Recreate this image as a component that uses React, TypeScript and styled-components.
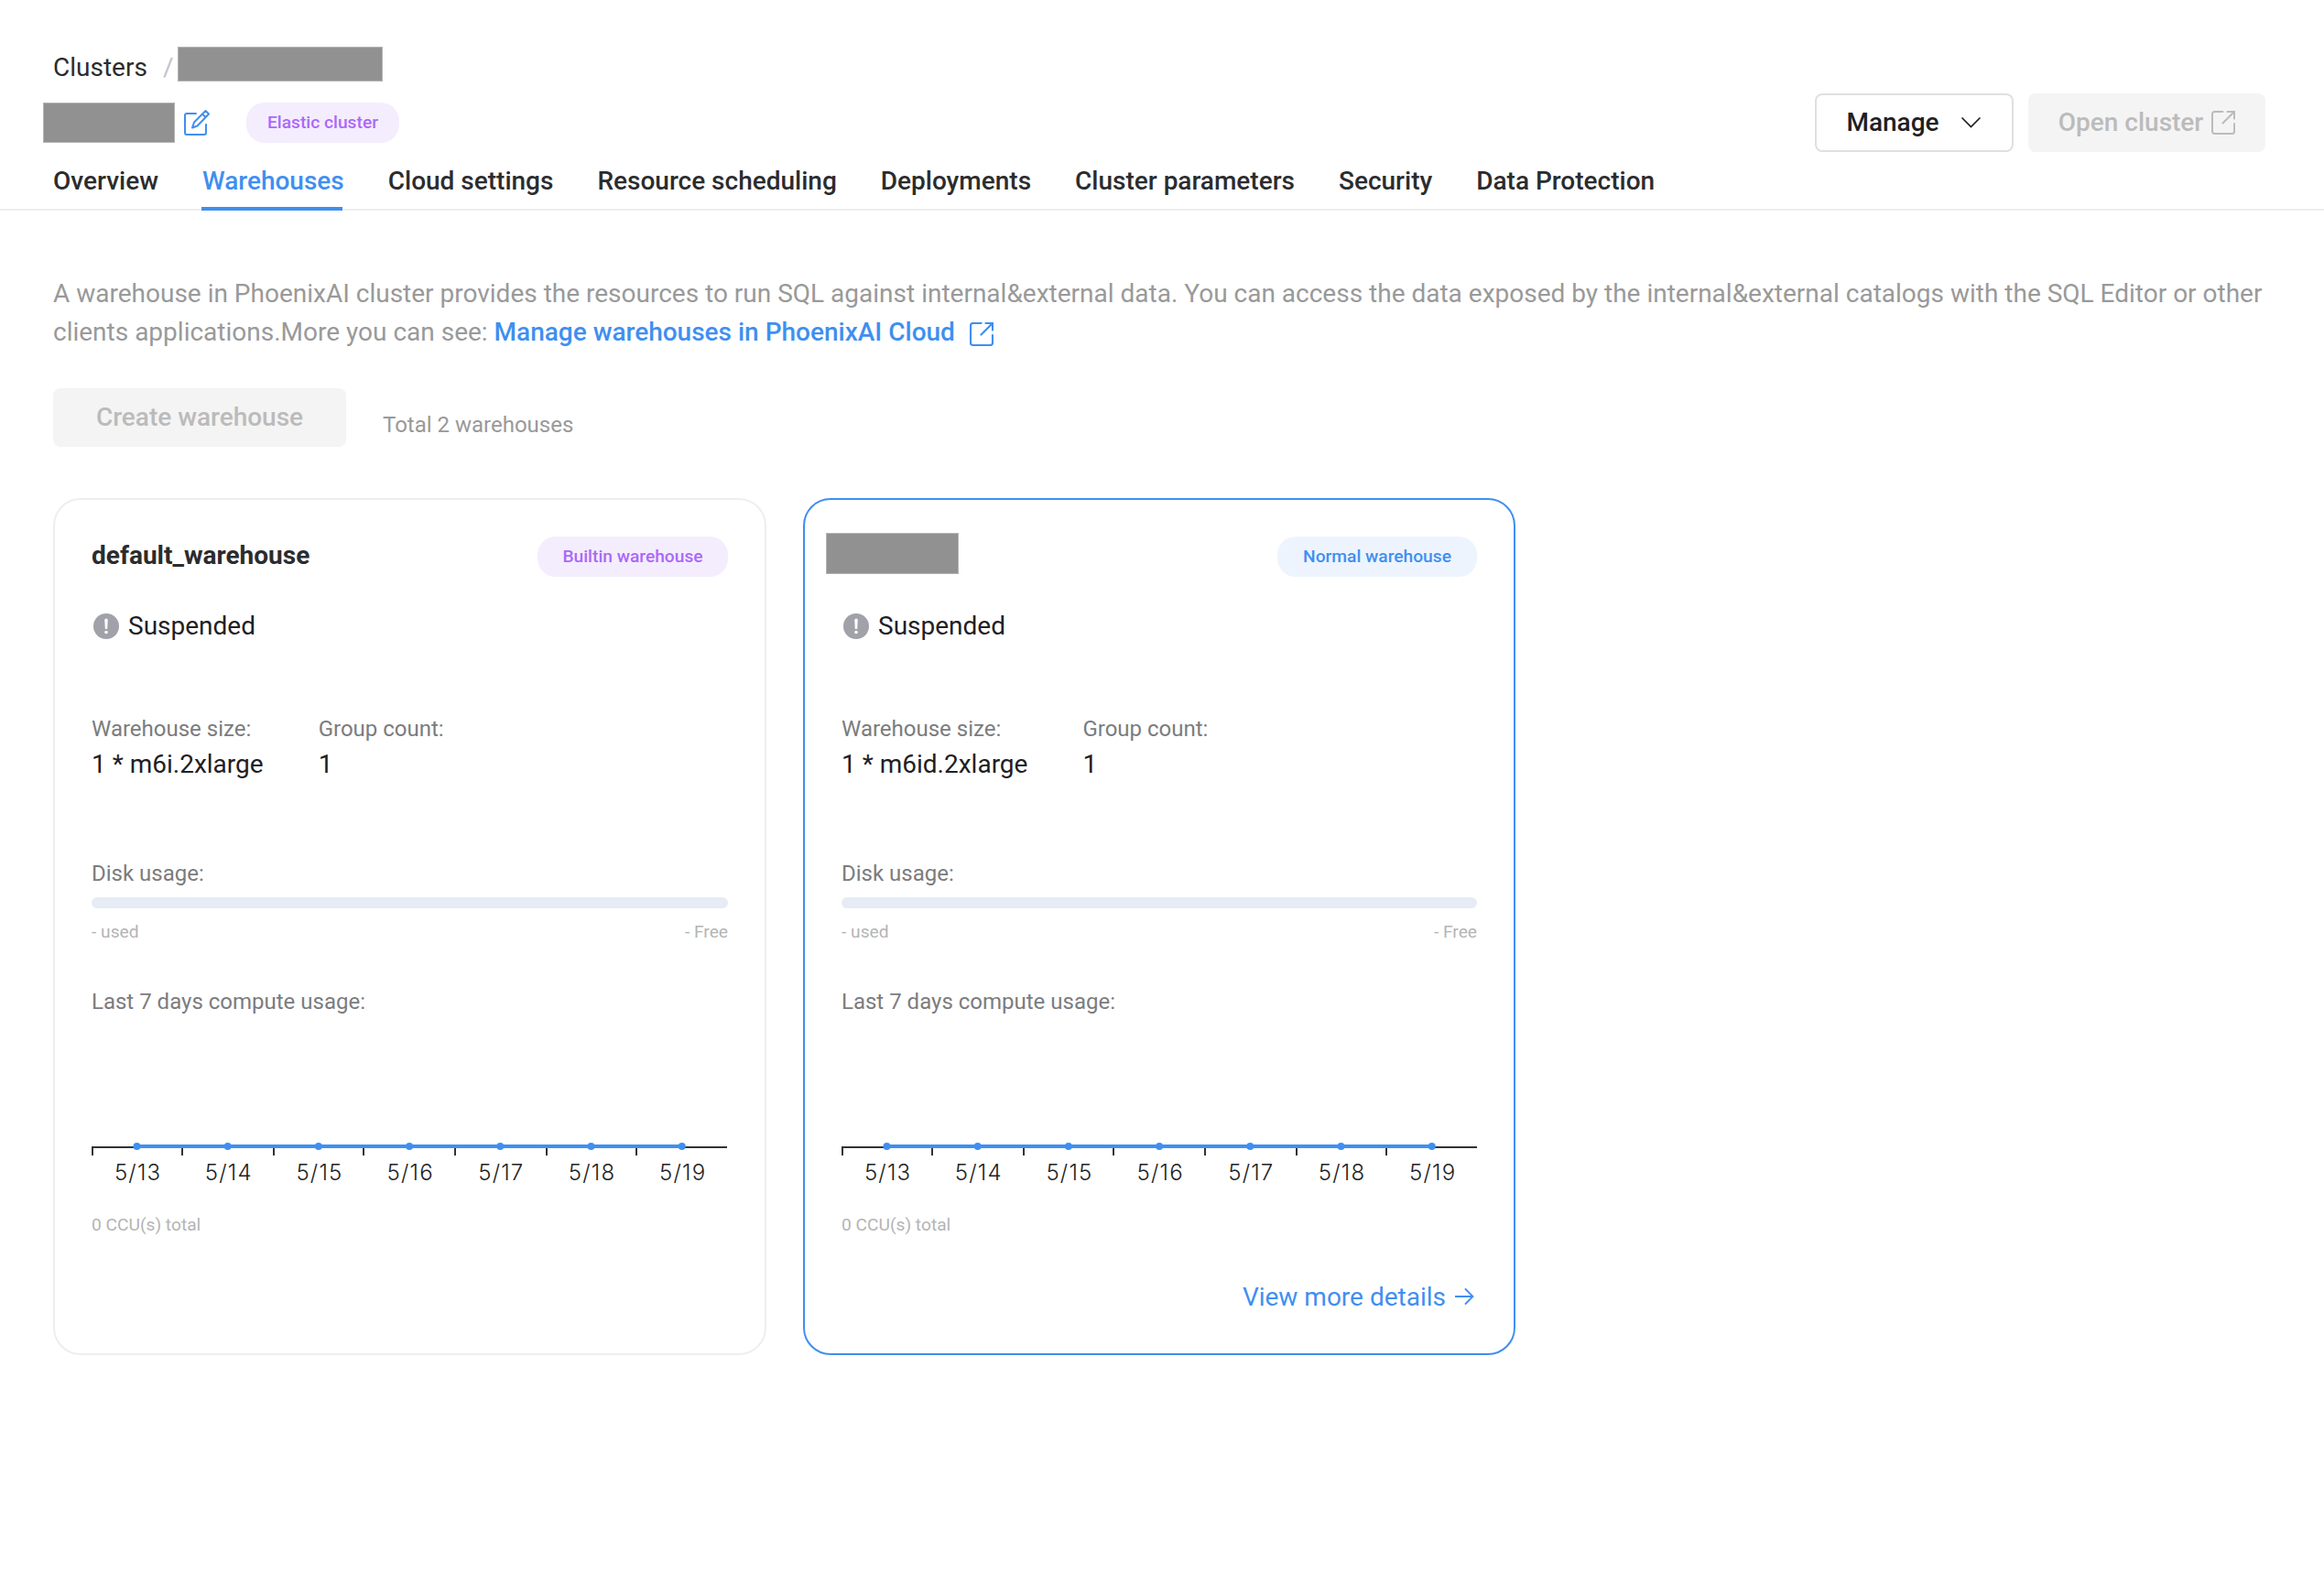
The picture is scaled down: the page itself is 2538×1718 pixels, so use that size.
import React from 'react';
import styled, { createGlobalStyle } from 'styled-components';

const BLUE = '#3f8ff0';

const Global = createGlobalStyle`
  * { box-sizing: border-box; }
  body { margin: 0; background: #fff; font-family: Roboto, "Liberation Sans", sans-serif; color: #2b2c2e; }
`;

const Page = styled.div`
  width: 2538px;
  height: 1718px;
  overflow: hidden;
  background: #fff;
`;

const Header = styled.header`
  height: 230px;
  padding: 51px 64px 0 47px;
  border-bottom: 2px solid #eeeeee;
  display: flex;
  flex-direction: column;
`;

const Breadcrumb = styled.nav`
  display: flex;
  height: 51px;
  padding-left: 11px;
  font-size: 28px;
  line-height: 46px;
`;

const Slash = styled.span`
  color: #c0c4cc;
  margin: 0 5px 0 17px;
`;

const Redacted = styled.span<{ $w: number; $h: number }>`
  display: block;
  flex: none;
  width: ${(p) => p.$w}px;
  height: ${(p) => p.$h}px;
  background: #919191;
  border: 1px solid #b4b4b4;
`;

const TitleRow = styled.div`
  display: flex;
  align-items: flex-start;
  height: 64px;
`;

const TitleGroup = styled.div`
  display: flex;
  align-items: center;
  padding-top: 10px;
`;

const Badge = styled.span<{ $tone: 'purple' | 'blue'; $w: number }>`
  display: flex;
  align-items: center;
  justify-content: center;
  width: ${(p) => p.$w}px;
  height: 44px;
  padding-bottom: 1px;
  border-radius: 20px;
  font-size: 19.2px;
  font-weight: 500;
  white-space: nowrap;
  color: ${(p) => (p.$tone === 'purple' ? '#ab68f8' : BLUE)};
  background: ${(p) => (p.$tone === 'purple' ? '#f4edfe' : '#edf4fe')};
`;

const Actions = styled.div`
  display: flex;
  gap: 16px;
  margin-left: auto;
`;

const Button = styled.button<{ $w: number; $disabled?: boolean }>`
  display: flex;
  align-items: center;
  justify-content: center;
  width: ${(p) => p.$w}px;
  height: 64px;
  padding: 0 0 2px;
  border-radius: 8px;
  border: ${(p) => (p.$disabled ? '0' : '2px solid #e0e0e0')};
  background: ${(p) => (p.$disabled ? '#f4f4f4' : '#fff')};
  color: ${(p) => (p.$disabled ? '#bbbbbb' : '#1f2023')};
  font: 500 28px Roboto, "Liberation Sans", sans-serif;
`;

const Tabs = styled.div`
  display: flex;
  gap: 48px;
  margin-top: auto;
  margin-bottom: -2px;
  padding-left: 11px;
`;

const Tab = styled.a<{ $active?: boolean }>`
  position: relative;
  height: 54px;
  font-size: 28px;
  font-weight: 500;
  line-height: 44px;
  white-space: nowrap;
  color: ${(p) => (p.$active ? BLUE : '#2b2c2e')};

  &::after {
    content: '';
    display: ${(p) => (p.$active ? 'block' : 'none')};
    position: absolute;
    left: -1px;
    right: 2px;
    bottom: 0;
    height: 4px;
    background: ${BLUE};
  }
`;

const Main = styled.main`
  padding: 69px 58px 0;
`;

const Intro = styled.p`
  margin: 0;
  padding-top: 1px;
  height: 84px;
  font-size: 28px;
  line-height: 42px;
  color: #999999;
  white-space: nowrap;
`;

const DocLink = styled.a`
  color: ${BLUE};
  font-weight: 500;
  svg { margin-left: 16px; vertical-align: -6px; }
`;

const Toolbar = styled.div`
  display: flex;
  margin-top: 41px;
  height: 64px;
`;

const Total = styled.span`
  margin: 24px 0 0 40px;
  font-size: 24px;
  line-height: 32px;
  color: #999999;
`;

const Cards = styled.div`
  display: grid;
  grid-template-columns: 779px 778px;
  gap: 40px;
  margin-top: 56px;
`;

const Card = styled.section<{ $active?: boolean }>`
  display: flex;
  flex-direction: column;
  height: 936px;
  padding: 40px;
  border: 2px solid ${(p) => (p.$active ? BLUE : '#eeeeee')};
  border-radius: 30px;
`;

const CardHead = styled.div`
  display: flex;
  align-items: center;
  justify-content: space-between;
  height: 44px;
`;

const CardTitle = styled.h3`
  margin: 0;
  padding-bottom: 3px;
  font-size: 28px;
  font-weight: 700;
  line-height: 40px;
`;

const CardRedaction = styled.div`
  margin: -8px 0 0 -17px;
`;

const Status = styled.div`
  display: flex;
  align-items: center;
  gap: 10px;
  margin-top: 34px;
  height: 40px;
  font-size: 28px;
  color: #1f2023;
`;

const StatusText = styled.span`
  padding-bottom: 2px;
`;

const Facts = styled.div`
  display: flex;
  gap: 60px;
  margin-top: 76px;
`;

const Label = styled.div`
  font-size: 24px;
  line-height: 32px;
  color: #7b7c7e;
`;

const Value = styled.div`
  margin-top: 3px;
  font-size: 28px;
  line-height: 40px;
  color: #1f2023;
`;

const DiskLabel = styled(Label)`
  margin-top: 83px;
`;

const Meter = styled.div`
  height: 12px;
  margin-top: 10px;
  border-radius: 6px;
  background: #e6ebf4;
`;

const MeterLegend = styled.div`
  display: flex;
  justify-content: space-between;
  margin-top: 14px;
  font-size: 19.2px;
  line-height: 24px;
  color: #b4b4b4;
`;

const UsageLabel = styled(Label)`
  margin-top: 48px;
`;

const Chart = styled.svg`
  display: block;
  margin-top: 126px;
  overflow: visible;
`;

const Days = styled.div`
  display: grid;
  grid-template-columns: repeat(7, 99.2px);
  margin-top: 3px;
  padding-left: 1px;
  font: 300 24px/32px Inter, sans-serif;
  letter-spacing: 1.2px;
  text-align: center;
  color: #222222;
`;

const Ccu = styled.div`
  margin-top: 29px;
  font-size: 19.2px;
  line-height: 24px;
  color: #b4b4b4;
`;

const Details = styled.a`
  display: flex;
  align-items: center;
  align-self: flex-end;
  gap: 10px;
  margin-top: 47px;
  font-size: 28px;
  line-height: 40px;
  color: ${BLUE};
`;

const External = ({ width = 2 }: { width?: number }) => (
  <svg
    width="26"
    height="26"
    viewBox="0 0 26 26"
    fill="none"
    stroke="currentColor"
    strokeWidth={width}
    strokeLinecap="round"
  >
    <path d="M12.5 1H3.5A2.5 2.5 0 0 0 1 3.5v19A2.5 2.5 0 0 0 3.5 25h19a2.5 2.5 0 0 0 2.5-2.5V14M17.5 1H25v7.5M25 1 12.5 13.5" />
  </svg>
);

const EditIcon = styled.svg`
  margin: 0 40px 0 10px;
`;

const Caret = styled.svg`
  margin: 1px 1px 0 24px;
`;

const ExtSlot = styled.span`
  display: flex;
  margin: 1px 0 0 9px;
`;

const Edit = () => (
  <EditIcon
    width="28"
    height="30"
    viewBox="0 0 28 30"
    fill="none"
    stroke={BLUE}
    strokeWidth="2"
    strokeLinecap="round"
    strokeLinejoin="round"
  >
    <path d="M13 5H3a2 2 0 0 0-2 2v19a2 2 0 0 0 2 2h19a2 2 0 0 0 2-2V17" />
    <path d="M9 20.5 11 14.5 23.5 2 27 5.5 14.5 18.5ZM20 5.5l3.5 3.5" />
  </EditIcon>
);

const days = ['5/13', '5/14', '5/15', '5/16', '5/17', '5/18', '5/19'];
const ticks = [1, 99, 199, 297, 397, 497, 595];

interface Warehouse {
  name?: string;
  kind: string;
  tone: 'purple' | 'blue';
  badgeWidth: number;
  size: string;
}

const WarehouseCard = ({ name, kind, tone, badgeWidth, size }: Warehouse) => (
  <Card $active={!name}>
    <CardHead>
      {name ? <CardTitle>{name}</CardTitle> : <CardRedaction><Redacted $w={145} $h={45} /></CardRedaction>}
      <Badge $tone={tone} $w={badgeWidth}>{kind}</Badge>
    </CardHead>
    <Status>
      <svg width="30" height="28" viewBox="0 0 30 28">
        <circle cx="16" cy="14" r="14" fill="#a1a1a9" />
        <path d="M14.3 7.3a1.7 1.7 0 0 1 3.4 0l-.5 9.7h-2.4z" fill="#fff" />
        <circle cx="16" cy="20.5" r="1.8" fill="#fff" />
      </svg>
      <StatusText>Suspended</StatusText>
    </Status>
    <Facts>
      <div><Label>Warehouse size:</Label><Value>{size}</Value></div>
      <div><Label>Group count:</Label><Value>1</Value></div>
    </Facts>
    <DiskLabel>Disk usage:</DiskLabel>
    <Meter />
    <MeterLegend><span>- used</span><span>- Free</span></MeterLegend>
    <UsageLabel>Last 7 days compute usage:</UsageLabel>
    <Chart width="694" height="26" viewBox="0 0 694 26">
      <path d="M0 17H694" stroke="#333" strokeWidth="2" />
      {ticks.map((x) => <path key={x} d={`M${x} 16V26`} stroke="#333" strokeWidth="2" />)}
      <path d="M49.5 16H644.5" stroke={BLUE} strokeWidth="4" />
      {days.map((d, i) => <circle key={d} cx={49.5 + i * 99.2} cy="16" r="4" fill={BLUE} />)}
    </Chart>
    <Days>{days.map((d) => <span key={d}>{d}</span>)}</Days>
    <Ccu>0 CCU(s) total</Ccu>
    {!name && (
      <Details>
        View more details
        <svg width="24" height="20" viewBox="0 0 24 20" fill="none" stroke="currentColor" strokeWidth="1.8" strokeLinecap="round">
          <path d="M0 9H19.5M11.5 1l8 8-8 8" />
        </svg>
      </Details>
    )}
  </Card>
);

const tabs = ['Overview', 'Warehouses', 'Cloud settings', 'Resource scheduling', 'Deployments', 'Cluster parameters', 'Security', 'Data Protection'];

export default function App() {
  return (
    <Page>
      <Global />
      <Header>
        <Breadcrumb>
          <span>Clusters</span>
          <Slash>/</Slash>
          <Redacted $w={224} $h={38} />
        </Breadcrumb>
        <TitleRow>
          <TitleGroup>
            <Redacted $w={144} $h={44} />
            <Edit />
            <Badge $tone="purple" $w={167}>Elastic cluster</Badge>
          </TitleGroup>
          <Actions>
            <Button $w={217}>
              Manage
              <Caret width="22" height="12" viewBox="0 0 22 12" fill="none" stroke="currentColor" strokeWidth="1.7" strokeLinecap="round">
                <path d="m1 1 9.5 9.5L20 1" />
              </Caret>
            </Button>
            <Button $w={259} $disabled>
              Open cluster
              <ExtSlot><External /></ExtSlot>
            </Button>
          </Actions>
        </TitleRow>
        <Tabs>{tabs.map((t) => <Tab key={t} $active={t === 'Warehouses'}>{t}</Tab>)}</Tabs>
      </Header>
      <Main>
        <Intro>
          A warehouse in PhoenixAI cluster provides the resources to run SQL against internal&amp;external data. You can access the data exposed by the internal&amp;external catalogs with the SQL Editor or other
          <br />
          clients applications.More you can see: <DocLink>Manage warehouses in PhoenixAI Cloud<External width={2.2} /></DocLink>
        </Intro>
        <Toolbar>
          <Button $w={320} $disabled>Create warehouse</Button>
          <Total>Total 2 warehouses</Total>
        </Toolbar>
        <Cards>
          <WarehouseCard name="default_warehouse" kind="Builtin warehouse" tone="purple" badgeWidth={208} size="1 * m6i.2xlarge" />
          <WarehouseCard kind="Normal warehouse" tone="blue" badgeWidth={218} size="1 * m6id.2xlarge" />
        </Cards>
      </Main>
    </Page>
  );
}
